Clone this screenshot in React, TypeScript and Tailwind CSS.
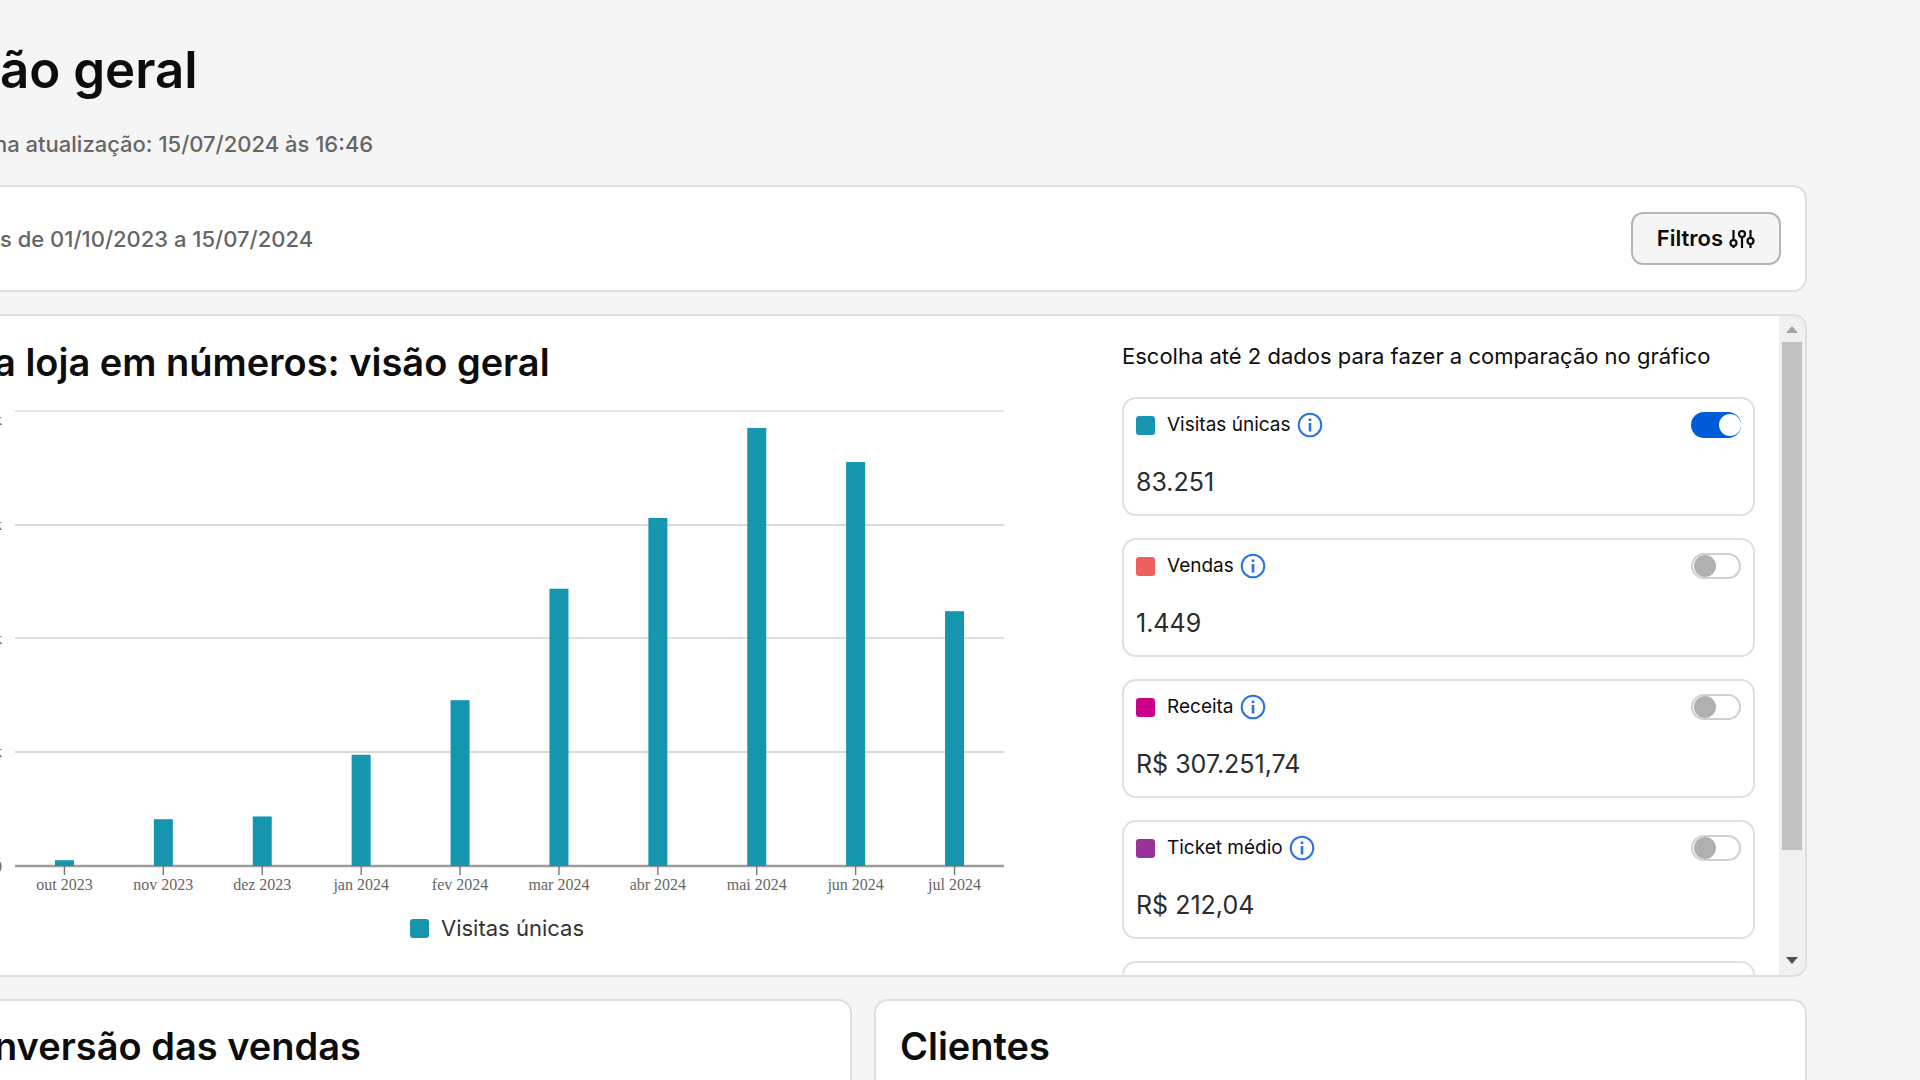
import { useState } from 'react'

interface Metric {
  id: string
  label: string
  value: string
  swatch: string
}

interface Month {
  label: string
  visits: number
}

const METRICS: Metric[] = [
  { id: 'visitas', label: 'Visitas únicas', value: '83.251', swatch: 'bg-[#1595ae]' },
  { id: 'vendas', label: 'Vendas', value: '1.449', swatch: 'bg-[#ef5f5f]' },
  { id: 'receita', label: 'Receita', value: 'R$ 307.251,74', swatch: 'bg-[#cc0088]' },
  { id: 'ticket', label: 'Ticket médio', value: 'R$ 212,04', swatch: 'bg-[#993399]' },
]

const MONTHS: Month[] = [
  { label: 'out 2023', visits: 230 },
  { label: 'nov 2023', visits: 1850 },
  { label: 'dez 2023', visits: 1960 },
  { label: 'jan 2024', visits: 4400 },
  { label: 'fev 2024', visits: 6560 },
  { label: 'mar 2024', visits: 10970 },
  { label: 'abr 2024', visits: 13770 },
  { label: 'mai 2024', visits: 17330 },
  { label: 'jun 2024', visits: 15980 },
  { label: 'jul 2024', visits: 10080 },
]

const MAX_VISITS = 18000
const PLOT = { left: 15, right: 1004, top: 27, bottom: 482 }

const TICKS = [
  { label: '18k', y: 27, textY: 41, stroke: '#e6e6e6' },
  { label: '13,5k', y: 141, textY: 146, stroke: '#d9d9d9' },
  { label: '9k', y: 254, textY: 260, stroke: '#dfdfdf' },
  { label: '4,5k', y: 368, textY: 373, stroke: '#d9d9d9' },
]

function FilterIcon() {
  return (
    <svg width="26" height="20" viewBox="0 0 26 20" fill="none" stroke="currentColor" strokeWidth="2.2" aria-hidden="true">
      <circle cx="4.5" cy="14" r="3" />
      <path d="M4.5 1v10M4.5 17v2" />
      <circle cx="13" cy="5" r="3" />
      <path d="M13 8v11" />
      <circle cx="21.5" cy="12" r="3" />
      <path d="M21.5 1v8M21.5 15v4" />
    </svg>
  )
}

function InfoIcon() {
  return (
    <svg width="26" height="26" viewBox="0 0 26 26" fill="none" stroke="#2672e3" aria-hidden="true">
      <circle cx="13" cy="13" r="11.3" strokeWidth="2" />
      <path d="M13 11v8.5M13 6.5v2.5" strokeWidth="2.6" />
    </svg>
  )
}

function VisitsChart() {
  const step = (PLOT.right - PLOT.left) / MONTHS.length
  return (
    <svg className="block w-full" viewBox="0 0 1122 520" role="img" aria-label="Visitas únicas por mês">
      {TICKS.map(t => (
        <g key={t.label}>
          <path d={`M${PLOT.left} ${t.y}H${PLOT.right}`} stroke={t.stroke} strokeWidth="2" />
          <text x="2" y={t.textY} textAnchor="end" className="fill-[#666] font-['Liberation_Serif',serif] text-[16px]">{t.label}</text>
        </g>
      ))}
      <text x="2" y="488" textAnchor="end" className="fill-[#666] font-['Liberation_Serif',serif] text-[16px]">0</text>
      <path d={`M${PLOT.left} ${PLOT.bottom}H${PLOT.right}`} stroke="#9c9c9c" strokeWidth="2.4" />
      {MONTHS.map((m, i) => {
        const x = PLOT.left + step * (i + 0.5)
        const h = (m.visits / MAX_VISITS) * (PLOT.bottom - PLOT.top)
        return (
          <g key={m.label}>
            <path d={`M${x} ${PLOT.bottom}v9`} stroke="#777" strokeWidth="1.4" />
            <rect x={x - 9.5} y={PLOT.bottom - h} width="19" height={h} fill="#1595ae" />
            <text x={x} y="506" textAnchor="middle" className="fill-[#666] font-['Liberation_Serif',serif] text-[16px]">{m.label}</text>
          </g>
        )
      })}
    </svg>
  )
}

function MetricCard({ metric, checked, onToggle }: { metric: Metric; checked: boolean; onToggle: () => void }) {
  return (
    <div className="rounded-[14px] border-2 border-[#e0e0e0] px-3 pt-[13px] pb-3">
      <div className="flex h-[26px] items-center">
        <span className={'mr-3 size-[19px] rounded-[3px] ' + metric.swatch} />
        <label htmlFor={metric.id} className="text-[19px] leading-[26px]">{metric.label}</label>
        <button type="button" aria-label="Mais informações" className="ml-[6px]">
          <InfoIcon />
        </button>
        <input
          id={metric.id}
          type="checkbox"
          role="switch"
          checked={checked}
          onChange={onToggle}
          className="ml-auto flex h-[26px] w-[50px] appearance-none items-center rounded-full border-2 border-[#d0d0d0] bg-white before:ml-px before:block before:size-[22px] before:rounded-full before:bg-[#b0b0b0] checked:justify-end checked:border-r-0 checked:border-[#005bd9] checked:bg-[#005bd9] checked:before:bg-white"
        />
      </div>
      <p className="mt-6 text-[25px] leading-[40px] text-[#2b2b2b]">{metric.value}</p>
    </div>
  )
}

export default function App() {
  const [active, setActive] = useState<string[]>(['visitas'])

  // at most two series can be compared
  const toggle = (id: string) =>
    setActive(prev => (prev.includes(id) ? prev.filter(a => a !== id) : [...prev, id].slice(-2)))

  return (
    <main className="flex h-screen flex-col overflow-hidden bg-[#f5f5f5] pt-10 pr-[113px] font-['Inter',sans-serif] text-[#0d0d0d]">
      <h1 className="text-[51px] leading-[60px] font-semibold">ão geral</h1>
      <p className="mt-[30px] -ml-1.5 text-[22px] leading-[28px] font-medium text-[#666]">na atualização: 15/07/2024 às 16:46</p>

      {/* Period */}
      <section className="mt-[27px] flex shrink-0 items-center justify-between rounded-r-[14px] border-2 border-l-0 border-[#dfdfdf] bg-white py-[25px] pr-6">
        <p className="text-[22px] leading-[28px] font-medium text-[#666]">s de 01/10/2023 a 15/07/2024</p>
        <button type="button" className="flex h-[53px] items-center gap-[6px] rounded-[12px] border-2 border-[#b5b5b5] bg-[#f5f5f5] px-6 text-[22px] font-semibold">
          Filtros
          <FilterIcon />
        </button>
      </section>

      {/* Store numbers */}
      <section className="mt-[22px] flex h-[663px] shrink-0 overflow-hidden rounded-r-[14px] border-2 border-l-0 border-[#dfdfdf] bg-white">
        <div className="grid flex-1 grid-cols-[1122fr_633fr] items-start pr-6">
          <div className="pt-6">
            <h2 className="-ml-1.5 text-[38px] leading-[44px] font-semibold">a loja em números: visão geral</h2>
            <VisitsChart />
            <div className="mt-[10px] flex items-center justify-center gap-3 pr-[128px] text-[22px] leading-[28px] text-[#333]">
              <span className="size-[19px] rounded-[3px] bg-[#1595ae]" />
              Visitas únicas
            </div>
          </div>

          <div className="pt-[26px]">
            <p className="text-[22px] leading-[28px]">Escolha até 2 dados para fazer a comparação no gráfico</p>
            <div className="mt-[27px] flex flex-col gap-[22px]">
              {METRICS.map(m => (
                <MetricCard key={m.id} metric={m} checked={active.includes(m.id)} onToggle={() => toggle(m.id)} />
              ))}
              <div className="h-[119px] rounded-[14px] border-2 border-[#e0e0e0]" />
            </div>
          </div>
        </div>

        {/* Scrollbar */}
        <div className="flex w-[26px] flex-col items-center bg-[#f0f0f0]" aria-hidden="true">
          <svg className="h-[26px] w-[12px]" viewBox="0 0 12 26" fill="#a3a3a3">
            <path d="M6 10L12 17H0z" />
          </svg>
          <div className="h-[508px] w-5 bg-[#c1c1c1]" />
          <svg className="mt-auto h-[28px] w-[12px]" viewBox="0 0 12 28" fill="#505050">
            <path d="M0 10H12L6 17z" />
          </svg>
        </div>
      </section>

      <div className="mt-[22px] grid flex-1 grid-cols-[851fr_932fr] gap-[22px]">
        <section className="rounded-tr-[14px] border-t-2 border-r-2 border-[#dfdfdf] bg-white pt-[23px]">
          <h2 className="-ml-1.5 text-[38px] leading-[44px] font-semibold">nversão das vendas</h2>
        </section>
        <section className="rounded-t-[14px] border-2 border-b-0 border-[#dfdfdf] bg-white px-6 pt-[23px]">
          <h2 className="text-[38px] leading-[44px] font-semibold">Clientes</h2>
        </section>
      </div>
    </main>
  )
}
